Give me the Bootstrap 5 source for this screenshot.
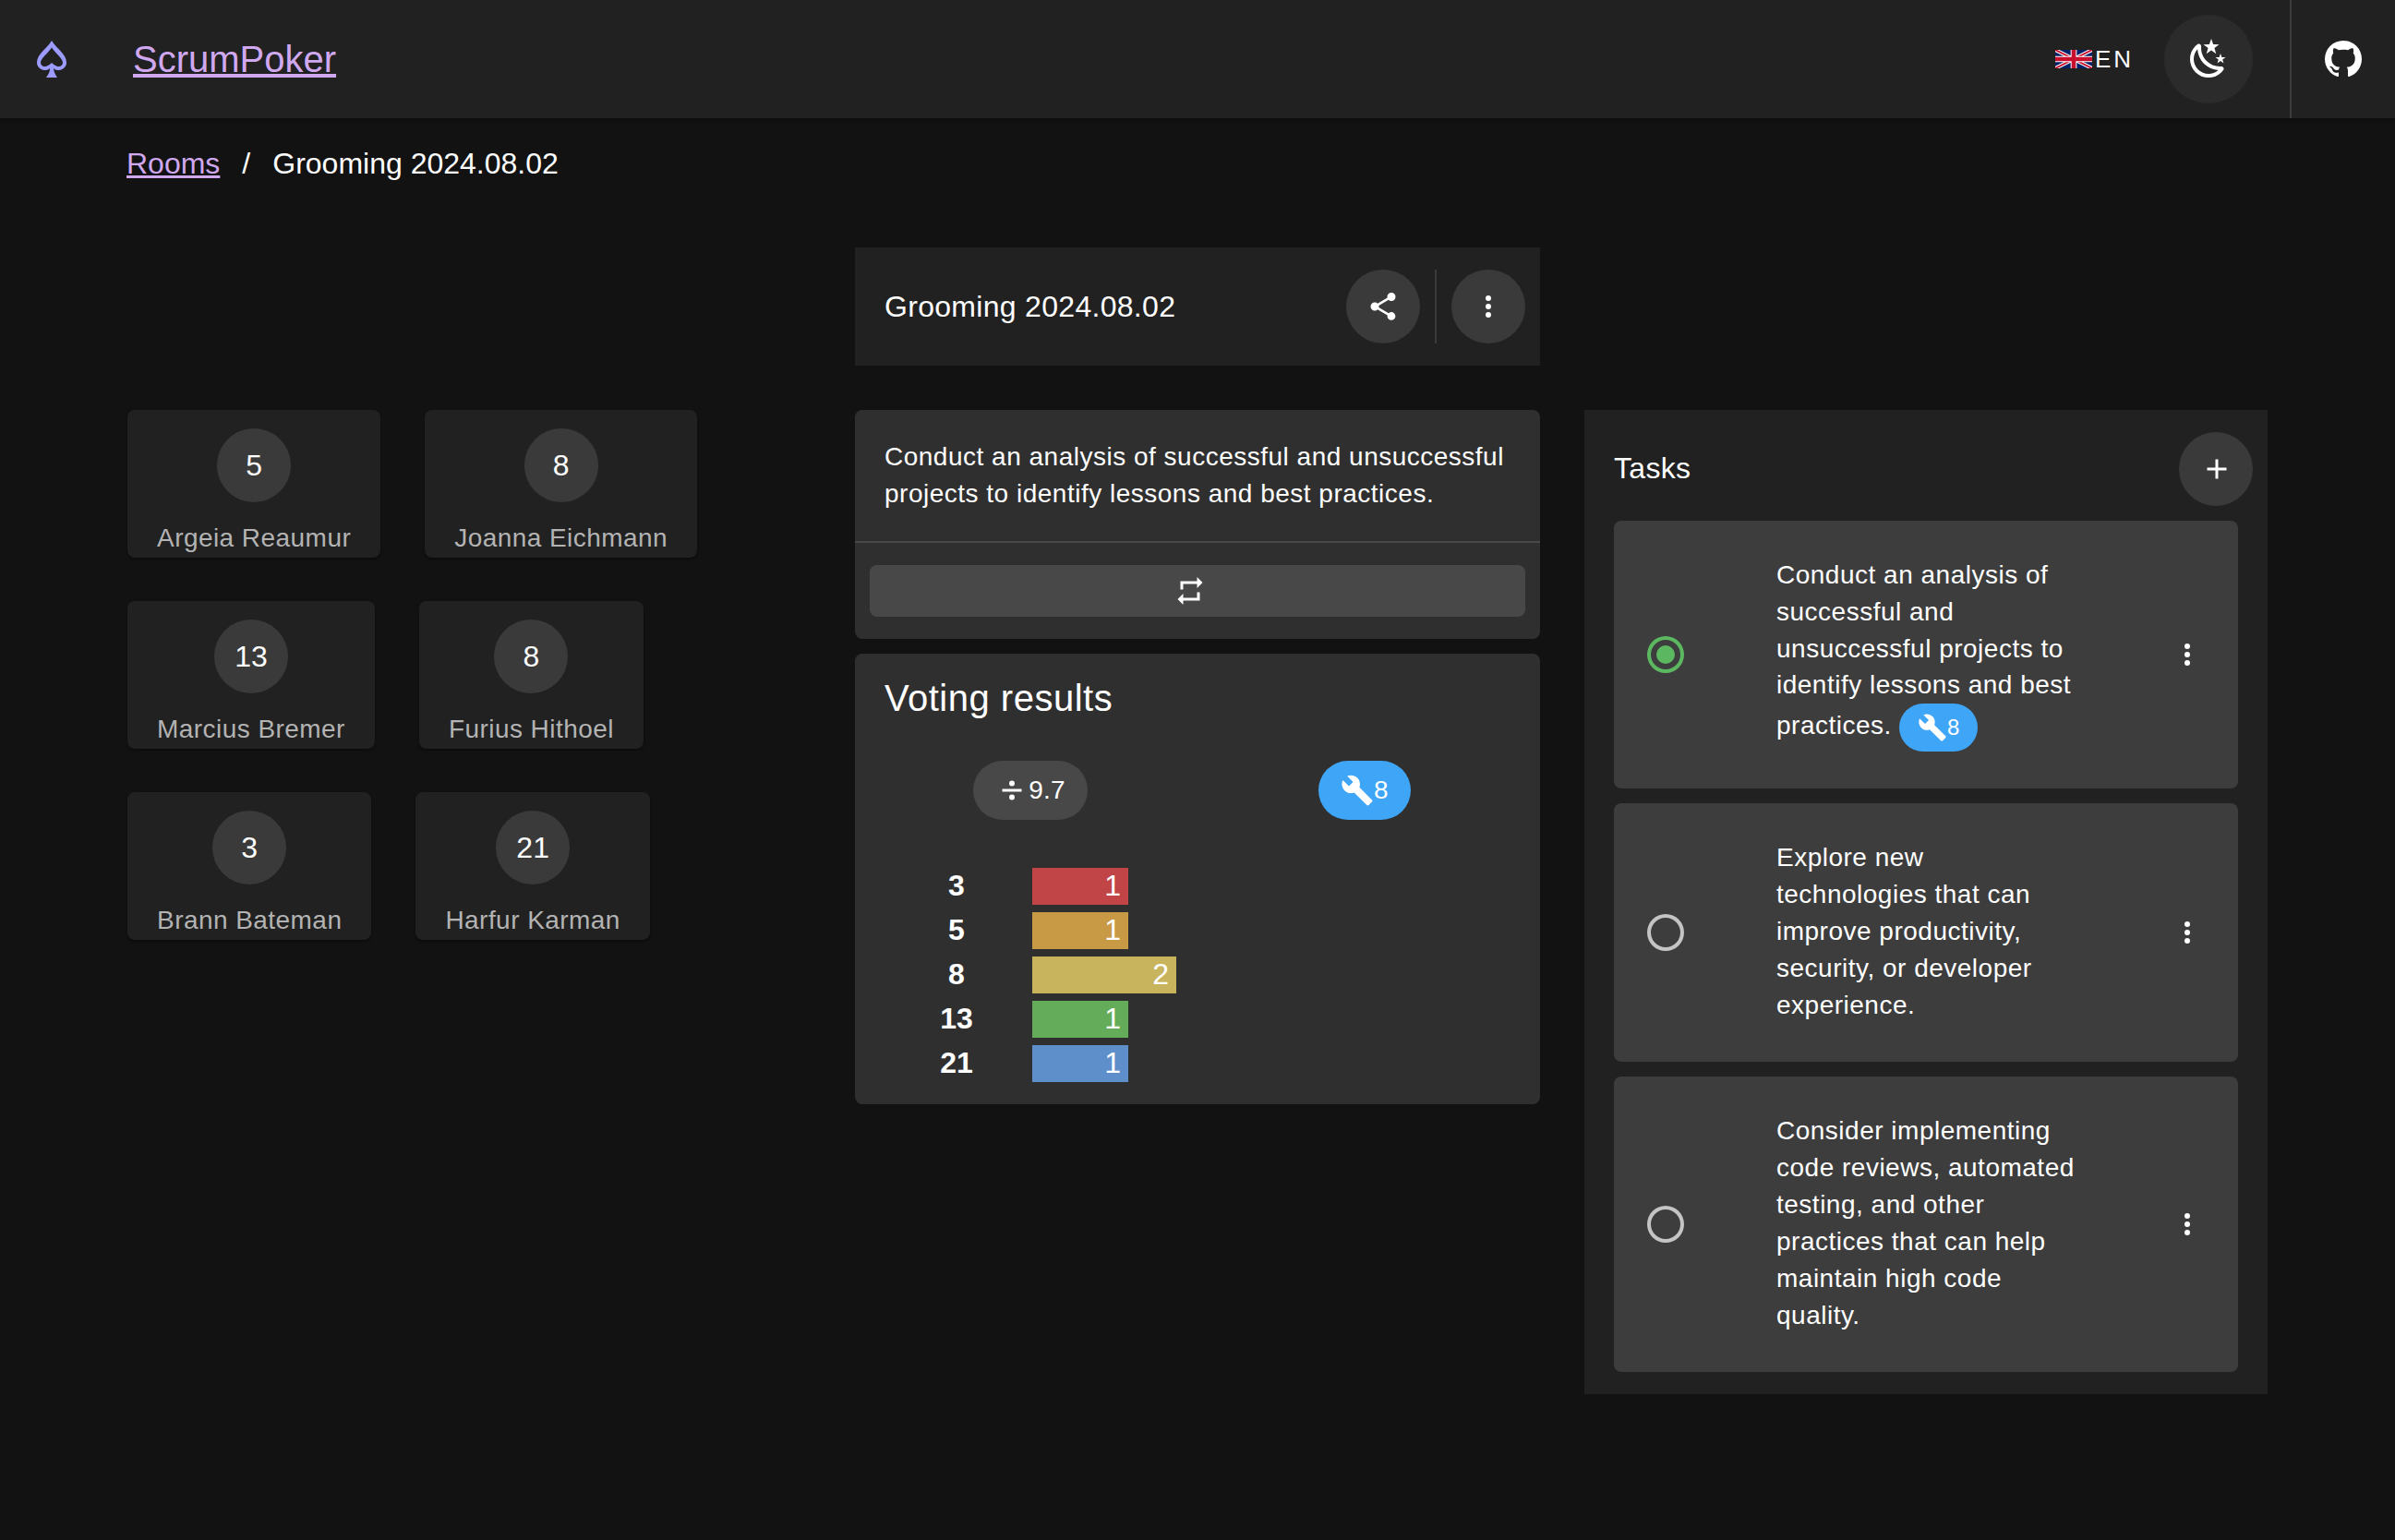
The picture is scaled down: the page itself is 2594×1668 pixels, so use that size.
<!doctype html>
<html lang="en" data-bs-theme="dark">
<head>
<meta charset="utf-8">
<title>ScrumPoker</title>
<link href="https://cdn.jsdelivr.net/npm/bootstrap@5.3.0/dist/css/bootstrap.min.css" rel="stylesheet">
<style>
html,body{background:#121212;min-height:100%}
body{font-family:"Liberation Sans",Arial,sans-serif;color:#fff;font-size:28px;letter-spacing:.5px;line-height:40px}
.ico{fill:currentColor;display:block;flex:none}
.i32{width:32px;height:32px}.i36{width:36px;height:36px}.i48{width:48px;height:48px}
.topbar{height:128px;background:#212121;box-shadow:0 2px 4px rgba(0,0,0,.3);padding:0}
.spade{color:#9c9cff;margin-left:32px}
.brand{font-size:40px;line-height:48px;letter-spacing:0;margin-left:64px;color:#cfa8f0}
.lang{letter-spacing:3px;font-size:26px;gap:3px;margin-right:33px}
.moonbtn{width:96px;height:96px;background:#2b2b2b;margin-right:40px}
.vline{width:2px;height:128px;background:#3d3d3d}
.gh{margin:0 32px}
.crumbs{--bs-breadcrumb-margin-bottom:0;--bs-breadcrumb-item-padding-x:24px;--bs-breadcrumb-divider-color:#fff;--bs-breadcrumb-item-active-color:#fff;font-size:32px;letter-spacing:0;line-height:48px;padding:25px 0 0 137px}
.crumbs a{color:#cfa8f0}
.page{padding:0 112px}
.cell{padding:0 24px}
.titlebar{margin-top:67px;height:128px;background:#212121;padding:0 16px 0 32px;margin-bottom:48px}
.titletext{font-size:32px;letter-spacing:.3px}
.round{width:80px;height:80px;background:#3a3a3a;color:#fff;border:0;padding:0}
.vrule{width:2px;height:80px;background:#3a3a3a;margin:0 16px}
.players{row-gap:47px;padding-left:2px}
.pl{gap:48px}
.pcard{background:#212121;border-radius:8px;padding:20px 32px 0;box-shadow:0 2px 3px rgba(0,0,0,.35);height:160px}
.pval{width:80px;height:80px;background:#3a3a3a;font-size:32px;letter-spacing:0}
.pname{font-size:28px;letter-spacing:.45px;color:#b3b3b3;line-height:43.5px;margin-top:17px;white-space:nowrap}
.desc{background:#2f2f2f;border-radius:8px;margin-bottom:16px}
.desctext{padding:31px 32px 31px}
.deschr{height:2px;background:#484848}
.descfoot{padding:24px 16px}
.swap{height:56px;background:#484848;border:0;border-radius:8px;color:#fff;padding:0 16px 0 0}
.results{background:#2f2f2f;border-radius:8px;padding:24px 0;}
.rtitle{font-size:40px;line-height:48px;letter-spacing:.5px;padding-left:32px}
.pills{margin-top:44px;margin-bottom:52px;padding:0 15px 0 3px}
.pill{height:64px;border-radius:32px;padding:0 24px;letter-spacing:.2px}
.pillgrey{background:#484848}
.pillblue{background:#3fa5f7}
.barrow{height:40px;margin-bottom:8px;padding-left:32px}
.barrow:last-child{margin-bottom:0}
.barlabel{width:156px;margin-right:4px;text-align:center;font-weight:700;font-size:32px;letter-spacing:0;line-height:38px}
.bar{height:40px;text-align:right;padding-right:8px;font-size:32px;letter-spacing:0;line-height:38px}
.tasks{background:#212121;padding:24px 32px;margin-right:2px}
.taskhead{margin-right:-16px;margin-bottom:16px}
.taskname{padding-bottom:2px}
.plusbtn{padding-left:2px}
.taskcard{background:#3d3d3d;border-radius:8px;padding:39px 0 41px;margin-bottom:16px}
.taskcard:last-child{margin-bottom:0}
.taskcard .radio,.taskcard .dots{margin-top:2px}
.taskchipped{padding:39px 0 40px}
.taskchipped .tasktext{line-height:39.75px}
.taskchipped .radio,.taskchipped .dots{margin-top:0}
.radio{margin-left:32px}
.tasktext{margin-left:96px;width:330px}
.dots{margin-left:97px}
.chip{height:52px;border-radius:26px;padding:0 20px;background:#3fa5f7;font-size:24px;letter-spacing:0;vertical-align:middle}
.ok{color:#5cb860}.off{color:#c4c4c4}
</style>
</head>
<body>
<svg width="0" height="0" class="position-absolute" aria-hidden="true">
<symbol id="s-wrench" viewBox="0 0 24 24"><path d="M22.7,19L13.6,9.9C14.5,7.6 14,4.9 12.1,3C10.1,1 7.1,0.6 4.7,1.7L9,6L6,9L1.6,4.7C0.4,7.1 0.9,10.1 2.9,12.1C4.8,14 7.5,14.5 9.8,13.6L18.9,22.7C19.3,23.1 19.9,23.1 20.3,22.7L22.6,20.4C23.1,20 23.1,19.3 22.7,19Z"/></symbol>
<symbol id="s-dots" viewBox="0 0 24 24"><path d="M12,16A2,2 0 0,1 14,18A2,2 0 0,1 12,20A2,2 0 0,1 10,18A2,2 0 0,1 12,16M12,10A2,2 0 0,1 14,12A2,2 0 0,1 12,14A2,2 0 0,1 10,12A2,2 0 0,1 12,10M12,4A2,2 0 0,1 14,6A2,2 0 0,1 12,8A2,2 0 0,1 10,6A2,2 0 0,1 12,4Z"/></symbol>
<symbol id="s-off" viewBox="0 0 24 24"><path d="M12,20A8,8 0 0,1 4,12A8,8 0 0,1 12,4A8,8 0 0,1 20,12A8,8 0 0,1 12,20M12,2A10,10 0 0,0 2,12A10,10 0 0,0 12,22A10,10 0 0,0 22,12A10,10 0 0,0 12,2Z"/></symbol>
<symbol id="s-on" viewBox="0 0 24 24"><path d="M12,20A8,8 0 0,1 4,12A8,8 0 0,1 12,4A8,8 0 0,1 20,12A8,8 0 0,1 12,20M12,2A10,10 0 0,0 2,12A10,10 0 0,0 12,22A10,10 0 0,0 22,12A10,10 0 0,0 12,2M12,7A5,5 0 0,0 7,12A5,5 0 0,0 12,17A5,5 0 0,0 17,12A5,5 0 0,0 12,7Z"/></symbol>
</svg>

<nav class="navbar topbar flex-nowrap justify-content-start">
  <svg class="ico i48 spade" viewBox="0 0 24 24"><path fill-rule="evenodd" d="M12,2C9,7 4,9 4,14C4,16 6,18 8,18C9,18 10,18 11,17C11,17 11.32,19 9,22H15C13,19 13,17 13,17C14,18 15,18 16,18C18,18 20,16 20,14C20,9 15,7 12,2ZM12,5.8C10,9 6,11.5 6,14C6,15 7,16 8,16C9,16 10,15.8 12,14C14,15.8 15,16 16,16C17,16 18,15 18,14C18,11.5 14,9 12,5.8Z"/></svg>
  <a class="brand" href="#">ScrumPoker</a>
  <div class="d-flex align-items-center ms-auto">
    <div class="d-flex align-items-center lang">
      <svg width="40" height="20" viewBox="0 0 60 30" class="d-block"><rect width="60" height="30" fill="#012169"/><path d="M0,0L60,30M60,0L0,30" stroke="#fff" stroke-width="6"/><path d="M0,0L60,30M60,0L0,30" stroke="#C8102E" stroke-width="3"/><path d="M30,0V30M0,15H60" stroke="#fff" stroke-width="10"/><path d="M30,0V30M0,15H60" stroke="#C8102E" stroke-width="7"/></svg>
      <span>EN</span>
    </div>
    <button class="btn rounded-circle moonbtn d-flex align-items-center justify-content-center p-0 text-white border-0" aria-label="Theme">
      <svg class="ico i48" viewBox="0 0 24 24"><path d="M17.75,4.09L15.22,6.03L16.13,9.09L13.5,7.28L10.87,9.09L11.78,6.03L9.25,4.09L12.44,4L13.5,1L14.56,4L17.75,4.09M21.25,11L19.61,12.25L20.2,14.23L18.5,13.06L16.8,14.23L17.39,12.25L15.75,11L17.81,10.95L18.5,9L19.19,10.95L21.25,11M18.97,15.95C19.8,15.87 20.69,17.05 20.16,17.8C19.84,18.25 19.5,18.67 19.08,19.07C15.17,23 8.84,23 4.94,19.07C1.03,15.17 1.03,8.83 4.94,4.93C5.34,4.53 5.76,4.17 6.21,3.85C6.96,3.32 8.14,4.21 8.06,5.04C7.79,7.9 8.75,10.87 10.95,13.06C13.14,15.26 16.1,16.22 18.97,15.95M17.33,17.97C14.5,17.81 11.7,16.64 9.53,14.5C7.36,12.31 6.2,9.5 6.04,6.68C3.23,9.82 3.34,14.64 6.35,17.66C9.37,20.67 14.19,20.78 17.33,17.97Z"/></svg>
    </button>
    <div class="vline"></div>
    <svg class="ico i48 gh" viewBox="0 0 24 24"><path d="M12,2A10,10 0 0,0 2,12C2,16.42 4.87,20.17 8.84,21.5C9.34,21.58 9.5,21.27 9.5,21C9.5,20.77 9.5,20.14 9.5,19.31C6.73,19.91 6.14,17.97 6.14,17.97C5.68,16.81 5.03,16.5 5.03,16.5C4.12,15.88 5.1,15.9 5.1,15.9C6.1,15.97 6.63,16.93 6.63,16.93C7.5,18.45 8.97,18 9.54,17.76C9.63,17.11 9.89,16.67 10.17,16.42C7.95,16.17 5.62,15.31 5.62,11.5C5.62,10.39 6,9.5 6.65,8.79C6.55,8.54 6.2,7.5 6.75,6.15C6.75,6.15 7.59,5.88 9.5,7.17C10.29,6.95 11.15,6.84 12,6.84C12.85,6.84 13.71,6.95 14.5,7.17C16.41,5.88 17.25,6.15 17.25,6.15C17.8,7.5 17.45,8.54 17.35,8.79C18,9.5 18.38,10.39 18.38,11.5C18.38,15.32 16.04,16.16 13.81,16.41C14.17,16.72 14.5,17.33 14.5,18.26C14.5,19.6 14.5,20.68 14.5,21C14.5,21.27 14.66,21.59 15.17,21.5C19.14,20.16 22,16.42 22,12A10,10 0 0,0 12,2Z"/></svg>
  </div>
</nav>

<ol class="breadcrumb crumbs">
  <li class="breadcrumb-item"><a href="#">Rooms</a></li>
  <li class="breadcrumb-item active">Grooming 2024.08.02</li>
</ol>

<main class="page">
  <div class="row g-0">
    <div class="col-4 offset-4 cell">
      <div class="titlebar d-flex align-items-center">
        <span class="titletext me-auto">Grooming 2024.08.02</span>
        <button class="btn round rounded-circle d-flex align-items-center justify-content-center" aria-label="Share">
          <svg class="ico i36" viewBox="0 0 24 24"><path d="M18,16.08C17.24,16.08 16.56,16.38 16.04,16.85L8.91,12.7C8.96,12.47 9,12.24 9,12C9,11.76 8.96,11.53 8.91,11.3L15.96,7.19C16.5,7.69 17.21,8 18,8A3,3 0 0,0 21,5A3,3 0 0,0 18,2A3,3 0 0,0 15,5C15,5.24 15.04,5.47 15.09,5.7L8.04,9.81C7.5,9.31 6.79,9 6,9A3,3 0 0,0 3,12A3,3 0 0,0 6,15C6.79,15 7.5,14.69 8.04,14.19L15.16,18.34C15.11,18.55 15.08,18.77 15.08,19C15.08,20.61 16.39,21.91 18,21.91C19.61,21.91 20.92,20.61 20.92,19A2.92,2.92 0 0,0 18,16.08Z"/></svg>
        </button>
        <div class="vrule"></div>
        <button class="btn round rounded-circle d-flex align-items-center justify-content-center" aria-label="Menu">
          <svg class="ico i36"><use href="#s-dots"/></svg>
        </button>
      </div>
    </div>
  </div>

  <div class="row g-0">
    <div class="col-4 cell">
      <div class="d-flex flex-column players">
        <div class="d-flex pl">
          <div class="pcard d-flex flex-column align-items-center"><div class="pval rounded-circle d-flex align-items-center justify-content-center">5</div><div class="pname">Argeia Reaumur</div></div>
          <div class="pcard d-flex flex-column align-items-center"><div class="pval rounded-circle d-flex align-items-center justify-content-center">8</div><div class="pname">Joanna Eichmann</div></div>
        </div>
        <div class="d-flex pl">
          <div class="pcard d-flex flex-column align-items-center"><div class="pval rounded-circle d-flex align-items-center justify-content-center">13</div><div class="pname">Marcius Bremer</div></div>
          <div class="pcard d-flex flex-column align-items-center"><div class="pval rounded-circle d-flex align-items-center justify-content-center">8</div><div class="pname">Furius Hithoel</div></div>
        </div>
        <div class="d-flex pl">
          <div class="pcard d-flex flex-column align-items-center"><div class="pval rounded-circle d-flex align-items-center justify-content-center">3</div><div class="pname">Brann Bateman</div></div>
          <div class="pcard d-flex flex-column align-items-center"><div class="pval rounded-circle d-flex align-items-center justify-content-center">21</div><div class="pname">Harfur Karman</div></div>
        </div>
      </div>
    </div>

    <div class="col-4 cell">
      <div class="desc">
        <div class="desctext">Conduct an analysis of successful and unsuccessful projects to identify lessons and best practices.</div>
        <div class="deschr"></div>
        <div class="descfoot">
          <button class="btn swap w-100 d-flex align-items-center justify-content-center" aria-label="Repeat">
            <svg class="ico i36" viewBox="0 0 24 24"><path d="M17,17H7V14L3,18L7,22V19H19V13H17M7,7H17V10L21,6L17,2V5H5V11H7V7Z"/></svg>
          </button>
        </div>
      </div>
      <div class="results">
        <div class="rtitle">Voting results</div>
        <div class="d-flex justify-content-around pills">
          <div class="pill pillgrey d-flex align-items-center">
            <svg class="ico i36" viewBox="0 0 24 24"><path d="M19,13H5V11H19V13M12,5A2,2 0 0,1 14,7A2,2 0 0,1 12,9A2,2 0 0,1 10,7A2,2 0 0,1 12,5M12,15A2,2 0 0,1 14,17A2,2 0 0,1 12,19A2,2 0 0,1 10,17A2,2 0 0,1 12,15Z"/></svg>
            <span>9.7</span>
          </div>
          <div class="pill pillblue d-flex align-items-center">
            <svg class="ico i36"><use href="#s-wrench"/></svg>
            <span>8</span>
          </div>
        </div>
        <div>
          <div class="barrow d-flex"><div class="barlabel">3</div><div class="bar" style="width:104px;background:#c14546">1</div></div>
          <div class="barrow d-flex"><div class="barlabel">5</div><div class="bar" style="width:104px;background:#c99a45">1</div></div>
          <div class="barrow d-flex"><div class="barlabel">8</div><div class="bar" style="width:156px;background:#c9b45e">2</div></div>
          <div class="barrow d-flex"><div class="barlabel">13</div><div class="bar" style="width:104px;background:#65ac5a">1</div></div>
          <div class="barrow d-flex"><div class="barlabel">21</div><div class="bar" style="width:104px;background:#5e8fcb">1</div></div>
        </div>
      </div>
    </div>

    <div class="col-4 cell">
      <div class="tasks">
        <div class="d-flex align-items-center justify-content-between taskhead">
          <span class="titletext taskname">Tasks</span>
          <button class="btn round plusbtn rounded-circle d-flex align-items-center justify-content-center" aria-label="Add">
            <svg class="ico i36" viewBox="0 0 24 24"><path d="M19,13H13V19H11V13H5V11H11V5H13V11H19V13Z"/></svg>
          </button>
        </div>
        <div class="taskcard taskchipped d-flex align-items-center">
          <svg class="ico i48 radio ok"><use href="#s-on"/></svg>
          <div class="tasktext">Conduct an analysis of successful and unsuccessful projects to identify lessons and best practices. <span class="chip d-inline-flex align-items-center"><svg class="ico i32"><use href="#s-wrench"/></svg><span>8</span></span></div>
          <svg class="ico i36 dots"><use href="#s-dots"/></svg>
        </div>
        <div class="taskcard d-flex align-items-center">
          <svg class="ico i48 radio off"><use href="#s-off"/></svg>
          <div class="tasktext">Explore new technologies that can improve productivity, security, or developer experience.</div>
          <svg class="ico i36 dots"><use href="#s-dots"/></svg>
        </div>
        <div class="taskcard d-flex align-items-center">
          <svg class="ico i48 radio off"><use href="#s-off"/></svg>
          <div class="tasktext">Consider implementing code reviews, automated testing, and other practices that can help maintain high code quality.</div>
          <svg class="ico i36 dots"><use href="#s-dots"/></svg>
        </div>
      </div>
    </div>
  </div>
</main>
<script src="https://cdn.jsdelivr.net/npm/bootstrap@5.3.0/dist/js/bootstrap.bundle.min.js"></script>
</body>
</html>
